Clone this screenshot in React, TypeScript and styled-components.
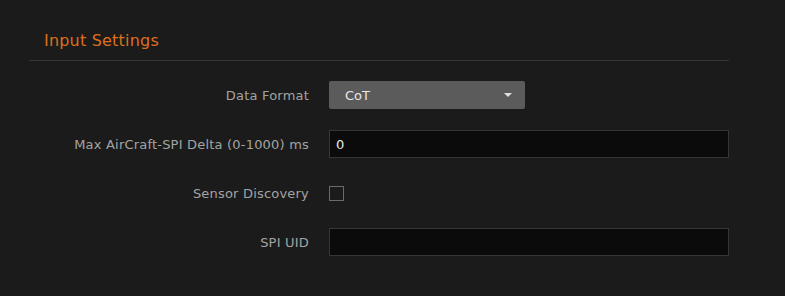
import React from 'react'
import styled, { createGlobalStyle } from 'styled-components'

const GlobalStyle = createGlobalStyle`
   html, body {
      margin: 0;
      padding: 0;
      background: #1b1b1b;
   }
   body {
      font-family: "DejaVu Sans", Verdana, sans-serif;
   }
`

const App = () => {
   return (
      <Page>
         <GlobalStyle />
         <Section>
            <Title>Input Settings</Title>
            <Form>
               <Row>
                  <Label>Data Format</Label>
                  <Select>
                     <span>CoT</span>
                     <Caret />
                  </Select>
               </Row>
               <Row>
                  <Label>Max AirCraft-SPI Delta (0-1000) ms</Label>
                  <TextInput defaultValue="0" />
               </Row>
               <Row>
                  <Label>Sensor Discovery</Label>
                  <CheckBox />
               </Row>
               <Row>
                  <Label>SPI UID</Label>
                  <TextInput defaultValue="" />
               </Row>
            </Form>
         </Section>
      </Page>
   )
}

const Page = styled.div`
   width: 785px;
   height: 296px;
   background: #1b1b1b;
   padding: 30px 56px 0 29px;
   box-sizing: border-box;
`

const Section = styled.div`
   width: 700px;
`

const Title = styled.h2`
   margin: 0;
   padding: 0 0 8px 15px;
   font-size: 16px;
   letter-spacing: 0.2px;
   font-weight: normal;
   color: #dd6f1c;
   line-height: 22px;
   border-bottom: 1px solid #353535;
`

const Form = styled.div`
   display: flex;
   flex-direction: column;
   gap: 21px;
   padding-top: 20px;
`

const Row = styled.div`
   display: grid;
   grid-template-columns: 280px 400px;
   column-gap: 20px;
   align-items: center;
   min-height: 28px;
`

const Label = styled.label`
   text-align: right;
   font-size: 13px;
   letter-spacing: 0.2px;
   color: #a3a3a3;
`

const Select = styled.div`
   width: 196px;
   height: 28px;
   box-sizing: border-box;
   background: #5b5b5b;
   border-radius: 2px;
   display: flex;
   align-items: center;
   justify-content: space-between;
   padding: 0 13px 0 16px;
   font-size: 13px;
   color: #e8e8e8;
`

const Caret = styled.span`
   width: 0;
   height: 0;
   border-left: 4px solid transparent;
   border-right: 4px solid transparent;
   border-top: 4px solid #e0e0e0;
`

const TextInput = styled.input`
   width: 400px;
   height: 28px;
   box-sizing: border-box;
   background: #0b0b0b;
   border: 1px solid #363636;
   outline: none;
   padding: 0 6px;
   font-family: "DejaVu Sans", Verdana, sans-serif;
   font-size: 13px;
   color: #e8e8e8;
`

const CheckBox = styled.span`
   width: 15px;
   height: 15px;
   box-sizing: border-box;
   border: 1px solid #6a6a6a;
   background: transparent;
`

export default App
